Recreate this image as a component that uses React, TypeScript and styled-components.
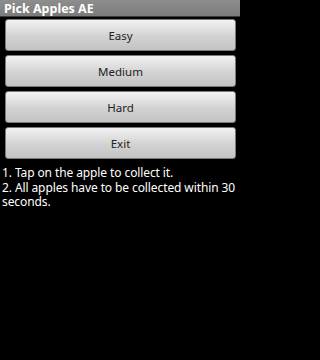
import React from 'react';
import styled, { createGlobalStyle } from 'styled-components';

const GlobalStyle = createGlobalStyle`
  html, body {
    margin: 0;
    padding: 0;
    background: #000;
  }
  body {
    font-family: "Noto Sans", "DejaVu Sans", sans-serif;
  }
`;

const SCScreen = styled.div`
  width: 240px;
  height: 360px;
  background: #000;
  overflow: hidden;
`;

const SCTitleBar = styled.div`
  height: 16px;
  display: flex;
  align-items: center;
  padding: 0 4px;
  background: linear-gradient(#8e8e8e, #7b7b7b);
  border-bottom: 1px solid #3a3a3a;
  color: #fff;
  font-size: 12.5px;
  font-weight: bold;
`;

const SCButtonList = styled.div`
  display: flex;
  flex-direction: column;
  gap: 4px;
  padding: 2px 4px 0 5px;
`;

const SCButton = styled.button`
  height: 32px;
  border: 1px solid #7a7a7a;
  border-radius: 3px;
  background: linear-gradient(#f2f2f2, #d2d2d2 55%, #c4c4c4);
  color: #222;
  font-family: "Noto Sans", "DejaVu Sans", sans-serif;
  font-size: 11.5px;
  padding: 0;
`;

const SCHelp = styled.div`
  padding: 7px 2px 0;
  color: #fff;
  font-size: 12px;
  line-height: 14.5px;
  letter-spacing: -0.1px;
`;

const items = ['Easy', 'Medium', 'Hard', 'Exit'];

const App = () => {
  return (
    <SCScreen>
      <GlobalStyle />
      <SCTitleBar>Pick Apples AE</SCTitleBar>
      <SCButtonList>
        {items.map((label) => (
          <SCButton key={label}>{label}</SCButton>
        ))}
      </SCButtonList>
      <SCHelp>
        <div>1. Tap on the apple to collect it.</div>
        <div>2. All apples have to be collected within 30 seconds.</div>
      </SCHelp>
    </SCScreen>
  );
};

export default App;
